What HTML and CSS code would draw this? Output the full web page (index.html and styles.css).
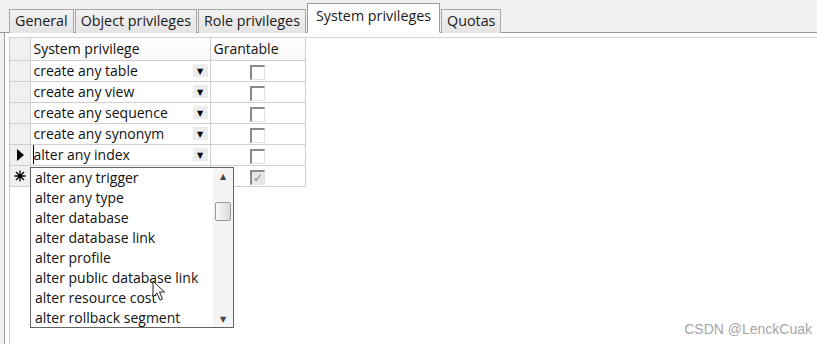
FILE: index.html
```html
<!DOCTYPE html>
<html lang="en">
<head>
    <meta charset="UTF-8">
    <title>User privileges</title>
    <link rel="stylesheet" href="styles.css">
</head>
<body>
    <div class="tabs">
        <div class="tab">General</div>
        <div class="tab">Object privileges</div>
        <div class="tab">Role privileges</div>
        <div class="tab active">System privileges</div>
        <div class="tab">Quotas</div>
    </div>

    <div class="panel">
        <div class="grid-box">
            <table class="grid">
                <thead>
                    <tr>
                        <th class="sel"></th>
                        <th class="col-priv">System privilege</th>
                        <th class="col-grant">Grantable</th>
                    </tr>
                </thead>
                <tbody>
                    <tr>
                        <td class="sel"></td>
                        <td class="priv"><span>create any table</span><span class="drop">&#9660;</span></td>
                        <td class="grant"><span class="check"></span></td>
                    </tr>
                    <tr>
                        <td class="sel"></td>
                        <td class="priv"><span>create any view</span><span class="drop">&#9660;</span></td>
                        <td class="grant"><span class="check"></span></td>
                    </tr>
                    <tr>
                        <td class="sel"></td>
                        <td class="priv"><span>create any sequence</span><span class="drop">&#9660;</span></td>
                        <td class="grant"><span class="check"></span></td>
                    </tr>
                    <tr>
                        <td class="sel"></td>
                        <td class="priv"><span>create any synonym</span><span class="drop">&#9660;</span></td>
                        <td class="grant"><span class="check"></span></td>
                    </tr>
                    <tr>
                        <td class="sel">
                            <svg class="marker" width="10" height="14" viewBox="0 0 10 14">
                                <path d="M2 1 L9 7 L2 13 Z" fill="#000"/>
                            </svg>
                        </td>
                        <td class="priv"><span class="editing">alter any index</span><span class="drop">&#9660;</span></td>
                        <td class="grant"><span class="check"></span></td>
                    </tr>
                    <tr>
                        <td class="sel">
                            <svg class="marker" width="12" height="12" viewBox="0 0 12 12">
                                <path d="M6 0.5 V11.5 M0.5 6 H11.5 M2 2 L10 10 M10 2 L2 10" stroke="#000" stroke-width="1.3"/>
                            </svg>
                        </td>
                        <td class="priv"></td>
                        <td class="grant"><span class="check checked">&#10003;</span></td>
                    </tr>
                </tbody>
            </table>

            <div class="dropdown">
                <ul class="options">
                    <li>alter any trigger</li>
                    <li>alter any type</li>
                    <li>alter database</li>
                    <li>alter database link</li>
                    <li>alter profile</li>
                    <li>alter public database link</li>
                    <li>alter resource cost</li>
                    <li>alter rollback segment</li>
                </ul>
                <div class="scrollbar">
                    <span class="arrow">&#9650;</span>
                    <div class="track">
                        <div class="thumb"></div>
                    </div>
                    <span class="arrow">&#9660;</span>
                </div>
            </div>

            <svg class="cursor" width="14" height="22" viewBox="0 0 14 22">
                <path d="M1 1 L1 17 L5 13 L8 20 L10.5 19 L7.5 12 L12.5 12 Z" fill="#fff" stroke="#222" stroke-width="1"/>
            </svg>
        </div>
    </div>

    <div class="watermark">CSDN @LenckCuak</div>
</body>
</html>
```

FILE: styles.css
```css
* {
    margin: 0;
    padding: 0;
    box-sizing: border-box;
}

body {
    font-family: 'Open Sans', 'DejaVu Sans', sans-serif;
    font-size: 14px;
    color: #111;
    background: #f0f0f0;
    width: 817px;
    height: 344px;
    overflow: hidden;
    position: relative;
}

/* Tab strip */
.tabs {
    display: flex;
    align-items: flex-end;
    gap: 1px;
    height: 33px;
    padding-left: 9px;
    border-bottom: 1px solid #9a9a9a;
}

.tab {
    height: 24px;
    padding: 0 5px;
    line-height: 22px;
    background: linear-gradient(#f2f2f2, #e4e4e4);
    border: 1px solid #a8a8a8;
    border-bottom: none;
    margin-bottom: -1px;
    color: #1a1a1a;
    font-size: 14.3px;
}

.tab.active {
    height: 30px;
    padding: 0 8px;
    line-height: 24px;
    background: #fff;
    border-color: #9a9a9a;
    position: relative;
    z-index: 1;
    border-bottom: 1px solid #fff;
}

/* Page panel */
.panel {
    background: #fff;
    margin-left: 4px;
    border-left: 1px solid #a0a0a0;
    height: 311px;
    padding: 4px 0 0 4px;
}

.grid-box {
    position: relative;
    height: 100%;
    border-top: 1px solid #d4d4d4;
    border-left: 1px solid #c8c8c8;
}

.grid {
    border-collapse: collapse;
    table-layout: fixed;
}

.grid th,
.grid td {
    border: 1px solid #cfcfcf;
    height: 21px;
    padding: 0 3px;
    text-align: left;
    font-weight: normal;
    white-space: nowrap;
}

.grid tr:first-child th {
    border-top: none;
}

.grid .sel:first-child {
    border-left: none;
}

.grid th {
    height: 22px;
    background: linear-gradient(#ffffff, #f7f7f7);
}

.grid .sel {
    width: 20px;
    background: #f0f0f0;
    padding: 0;
    text-align: center;
}

.marker {
    display: block;
    margin: 0 auto;
}

.col-priv {
    width: 180px;
}

.col-grant {
    width: 95px;
}

.priv {
    position: relative;
}

.drop {
    position: absolute;
    right: 2px;
    top: 3px;
    width: 15px;
    height: 13px;
    background: #ececec;
    font-size: 8px;
    line-height: 13px;
    text-align: center;
    color: #000;
}

.editing {
    border-left: 1px solid #000;
    margin-left: -1px;
}

.grid .grant {
    text-align: center;
}

.check {
    display: inline-block;
    vertical-align: middle;
    width: 15px;
    height: 15px;
    background: #fff;
    border-top: 2px solid #8a8a8a;
    border-left: 2px solid #8a8a8a;
    border-right: 1px solid #e2e2e2;
    border-bottom: 1px solid #e2e2e2;
}

.check.checked {
    background: #e6e6e6;
    color: #8c8c8c;
    font-size: 12px;
    line-height: 11px;
    font-weight: bold;
    text-align: center;
}

/* Open combo list */
.dropdown {
    position: absolute;
    left: 20px;
    top: 129px;
    width: 204px;
    height: 161px;
    background: #fff;
    border: 1px solid #646464;
    display: flex;
}

.options {
    flex: 1;
    list-style: none;
    padding-left: 4px;
}

.options li {
    height: 20px;
    line-height: 20px;
    font-size: 14px;
}

.scrollbar {
    width: 20px;
    display: flex;
    flex-direction: column;
    align-items: center;
    background: #f4f4f4;
}

.scrollbar .arrow {
    height: 16px;
    font-size: 8px;
    line-height: 16px;
    color: #444;
}

.track {
    flex: 1;
    width: 100%;
    padding: 18px 2px 0;
}

.thumb {
    height: 19px;
    border: 1px solid #9a9a9a;
    border-radius: 2px;
    background: linear-gradient(90deg, #fafafa, #dcdcdc);
}

.cursor {
    position: absolute;
    left: 142px;
    top: 242px;
}

.watermark {
    position: absolute;
    right: 5px;
    bottom: 7px;
    font-family: 'Liberation Sans', Arial, sans-serif;
    font-size: 14px;
    color: #a6a6a6;
}
```
